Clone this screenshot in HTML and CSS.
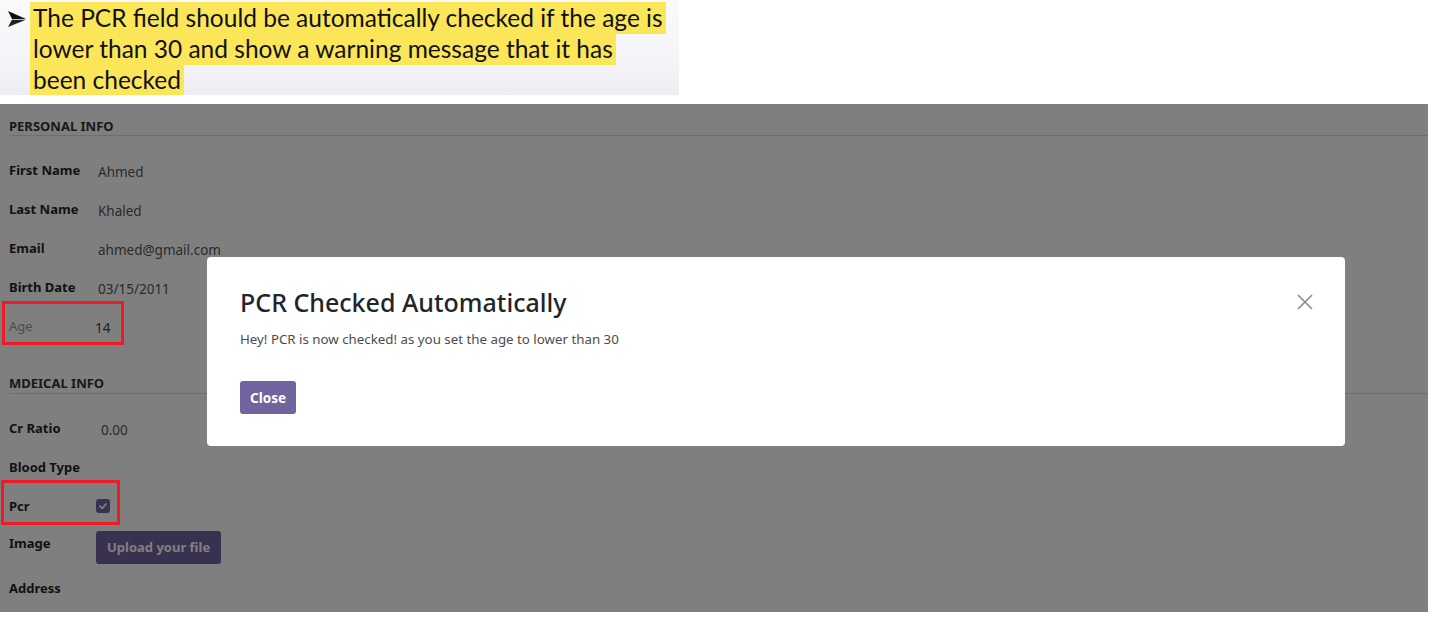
FILE: index.html
```html
<!DOCTYPE html>
<html lang="en">
<head>
<meta charset="utf-8">
<title>PCR Checked Automatically</title>
<link rel="stylesheet" href="styles.css">
</head>
<body>
  <div class="slide">
    <svg class="bullet" width="18" height="16" viewBox="0 0 18 16" aria-hidden="true">
      <polygon points="0,0 18,8 4,8" fill="#111"/>
      <polygon points="4,8.8 18,8.8 0,16" fill="#222"/>
    </svg>
    <p class="slide-text"><mark>The PCR field should be automatically checked if the age is lower than 30 and show a warning message that it has been checked</mark></p>
  </div>

  <div class="screen">
    <div class="form">
      <div class="section-title">Personal Info</div>
      <div class="row"><span class="label">First Name</span><span class="value">Ahmed</span></div>
      <div class="row"><span class="label">Last Name</span><span class="value">Khaled</span></div>
      <div class="row"><span class="label">Email</span><span class="value">ahmed@gmail.com</span></div>
      <div class="row"><span class="label">Birth Date</span><span class="value">03/15/2011</span></div>
      <div class="row"><span class="label label-muted">Age</span><span class="value value-age">14</span></div>

      <div class="section-title section-second">Mdeical Info</div>
      <div class="row"><span class="label">Cr Ratio</span><span class="value value-num">0.00</span></div>
      <div class="row"><span class="label">Blood Type</span></div>
      <div class="row"><span class="label">Pcr</span><span class="checkbox"><svg width="10" height="10" viewBox="0 0 10 10"><path d="M2 5.2 L4.2 7.3 L8 3" fill="none" stroke="#fff" stroke-width="1.8" stroke-linecap="round" stroke-linejoin="round"/></svg></span></div>
      <div class="row row-image"><span class="label">Image</span><span class="upload">Upload your file</span></div>
      <div class="row"><span class="label">Address</span></div>
    </div>

    <div class="backdrop"></div>

    <div class="annot annot-age"></div>
    <div class="annot annot-pcr"></div>

    <div class="modal">
      <h2 class="modal-title">PCR Checked Automatically</h2>
      <p class="modal-body">Hey! PCR is now checked! as you set the age to lower than 30</p>
      <button class="btn-close">Close</button>
      <svg class="modal-x" width="16" height="16" viewBox="0 0 16 16" aria-hidden="true">
        <path d="M1 1 L15 15 M15 1 L1 15" stroke="#8a8a8a" stroke-width="1.6" fill="none"/>
      </svg>
    </div>
  </div>
</body>
</html>
```

FILE: styles.css
```css
html, body {
  margin: 0;
  padding: 0;
  background: #fff;
}

body {
  font-family: "Noto Sans", "Open Sans", sans-serif;
  width: 1440px;
  height: 638px;
  overflow: hidden;
}

/* ---------- slide snippet ---------- */
.slide {
  width: 679px;
  height: 95px;
  overflow: hidden;
  display: flex;
  align-items: flex-start;
  background: linear-gradient(#faf9fb 0%, #f4f3f7 70%, #eeedf2 100%);
  box-sizing: border-box;
  padding: 0 0 0 8px;
}

.bullet {
  flex: none;
  margin-top: 11px;
}

.slide-text {
  margin: 0 0 0 4px;
  width: 640px;
  font-family: "Lato", "Liberation Sans", sans-serif;
  font-size: 24.5px;
  line-height: 31px;
  color: #111;
  padding-top: 2px;
}

.slide-text mark {
  background: #fbe65a;
  color: #111;
  padding: 1px 3px 2px 3px;
  -webkit-box-decoration-break: clone;
  box-decoration-break: clone;
}

/* ---------- screen with form ---------- */
.screen {
  position: relative;
  margin-top: 9px;
  width: 1428px;
  height: 508px;
  background: #fff;
  overflow: hidden;
}

.form {
  padding-left: 9px;
  color: #242424;
}

.section-title {
  padding-top: 13px;
  font-size: 13px;
  line-height: 18px;
  font-weight: 700;
  text-transform: uppercase;
  color: #333;
  border-bottom: 1px solid #dcdcdc;
  margin-bottom: 15px;
}

.section-second {
  margin-top: 15px;
  padding-bottom: 1px;
}

.row {
  display: flex;
  align-items: flex-start;
  height: 39px;
}

.label {
  width: 88px;
  flex: none;
  font-size: 13px;
  font-weight: 700;
  line-height: 19px;
  padding-top: 10px;
  color: #242424;
}

.label-muted {
  font-weight: 400;
  color: #9a9a9a;
}

.value {
  font-size: 13.5px;
  line-height: 19px;
  padding-top: 12px;
  margin-left: 1px;
  color: #555;
}

.value-age {
  margin-left: -2px;
  color: #444;
}

.value-num {
  margin-left: 4px;
}

.checkbox {
  margin-top: 12px;
  margin-left: -1px;
  width: 14px;
  height: 14px;
  border-radius: 3px;
  background: #71639e;
  display: flex;
  align-items: center;
  justify-content: center;
}

.row-image {
  height: 43px;
}

.row-image .label {
  padding-top: 8px;
}

.upload {
  margin-top: 5px;
  margin-left: -1px;
  height: 33px;
  line-height: 33px;
  padding: 0 11px;
  border-radius: 3px;
  background: #71639e;
  color: #fff;
  font-size: 13px;
  font-weight: 700;
}

/* ---------- overlays ---------- */
.backdrop {
  position: absolute;
  inset: 0;
  background: rgba(0, 0, 0, 0.5);
}

.annot {
  position: absolute;
  border: 3px solid #ed1c24;
  box-sizing: border-box;
}

.annot-age {
  left: 2px;
  top: 197px;
  width: 122px;
  height: 44px;
}

.annot-pcr {
  left: 1px;
  top: 376px;
  width: 119px;
  height: 45px;
}

.modal {
  position: absolute;
  left: 207px;
  top: 153px;
  width: 1138px;
  height: 189px;
  box-sizing: border-box;
  background: #fff;
  border-radius: 4px;
  padding: 30px 33px 0 33px;
}

.modal-title {
  margin: 0;
  font-size: 25px;
  line-height: 31px;
  font-weight: 500;
  color: #212529;
}

.modal-body {
  margin: 11px 0 0 0;
  font-size: 13.3px;
  line-height: 20px;
  color: #4c4c4c;
}

.btn-close {
  margin-top: 32px;
  height: 33px;
  width: 56px;
  padding: 0;
  border: 0;
  border-radius: 3px;
  background: #71639e;
  color: #fff;
  font-family: inherit;
  font-size: 13.5px;
  font-weight: 700;
}

.modal-x {
  position: absolute;
  right: 32px;
  top: 37px;
}
```
